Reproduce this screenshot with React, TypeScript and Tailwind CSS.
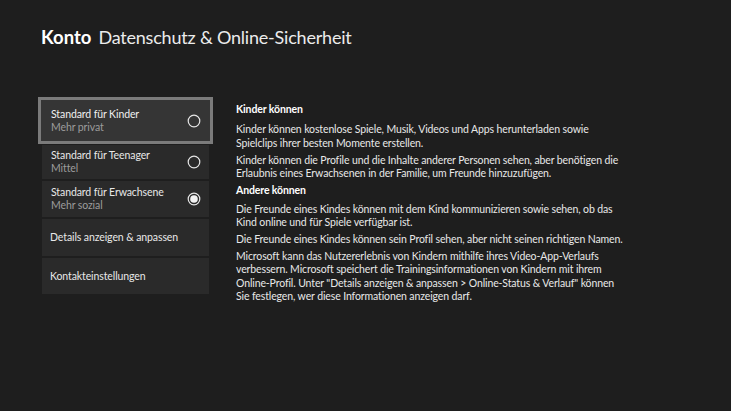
import React from "react";

const font = { fontFamily: 'Lato, "Open Sans", sans-serif' };

function Radio({ checked }: { checked?: boolean }) {
  return (
    <svg width="14" height="14" viewBox="0 0 14 14" className="shrink-0">
      <circle cx="7" cy="7" r="5.8" fill="none" stroke="#e6e6e6" strokeWidth="1.2" />
      {checked && <circle cx="7" cy="7" r="3.8" fill="#f2f2f2" />}
    </svg>
  );
}

type Opt = { title: string; sub: string; checked?: boolean };

const options: Opt[] = [
  { title: "Standard für Kinder", sub: "Mehr privat" },
  { title: "Standard für Teenager", sub: "Mittel" },
  { title: "Standard für Erwachsene", sub: "Mehr sozial", checked: true },
];

export default function App() {
  return (
    <div
      className="w-[731px] h-[411px] bg-[#1e1e1e] text-[#e8e8e8] overflow-hidden"
      style={font}
    >
      <header className="pt-[25px] pl-[41px] flex items-baseline gap-[7px] leading-[24px]">
        <span className="font-bold text-white text-[18.5px]">Konto</span>
        <span className="text-[#ececec] text-[18px] tracking-[-0.2px]">
          Datenschutz &amp; Online-Sicherheit
        </span>
      </header>

      <div className="flex mt-[51px] pl-[42px]">
        {/* settings menu */}
        <nav className="w-[167px] flex flex-col text-[10.5px] leading-[13px] tracking-[-0.1px]">
          <div className="-mx-[1px] h-[41px] bg-[#353535] ring-[3px] ring-[#7b7b7b] flex items-center pl-[10px] pr-[9px]">
            <div className="flex-1">
              <div className="text-[#f0f0f0]">{options[0].title}</div>
              <div className="text-[#9c9c9c]">{options[0].sub}</div>
            </div>
            <Radio />
          </div>
          <div className="mt-[4px] h-[34px] bg-[#2a2a2a] flex items-center pl-[9px] pr-[8px]">
            <div className="flex-1">
              <div>{options[1].title}</div>
              <div className="text-[#9c9c9c]">{options[1].sub}</div>
            </div>
            <Radio />
          </div>
          <div className="mt-[2px] h-[36px] bg-[#2a2a2a] flex items-center pl-[9px] pr-[8px]">
            <div className="flex-1">
              <div>{options[2].title}</div>
              <div className="text-[#9c9c9c]">{options[2].sub}</div>
            </div>
            <Radio checked />
          </div>
          <div className="mt-[2px] h-[37px] bg-[#2a2a2a] flex items-center pl-[8px]">
            Details anzeigen &amp; anpassen
          </div>
          <div className="mt-[2px] h-[36px] bg-[#2a2a2a] flex items-center pl-[8px]">
            Kontakteinstellungen
          </div>
        </nav>

        {/* description */}
        <section className="ml-[27px] w-[440px] text-[10.5px] leading-[13.3px] tracking-[-0.12px] pt-[3px]">
          <h2 className="font-bold text-white">Kinder können</h2>
          <p className="mt-[7px]">
            Kinder können kostenlose Spiele, Musik, Videos und Apps herunterladen sowie
            <br />
            Spielclips ihrer besten Momente erstellen.
          </p>
          <p className="mt-[3.7px]">
            Kinder können die Profile und die Inhalte anderer Personen sehen, aber benötigen die
            <br />
            Erlaubnis eines Erwachsenen in der Familie, um Freunde hinzuzufügen.
          </p>
          <h2 className="mt-[3.7px] font-bold text-white">Andere können</h2>
          <p className="mt-[5.5px]">
            Die Freunde eines Kindes können mit dem Kind kommunizieren sowie sehen, ob das
            <br />
            Kind online und für Spiele verfügbar ist.
          </p>
          <p className="mt-[3.7px]">
            Die Freunde eines Kindes können sein Profil sehen, aber nicht seinen richtigen Namen.
          </p>
          <p className="mt-[3.7px]">
            Microsoft kann das Nutzererlebnis von Kindern mithilfe ihres Video-App-Verlaufs
            <br />
            verbessern. Microsoft speichert die Trainingsinformationen von Kindern mit ihrem
            <br />
            Online-Profil. Unter "Details anzeigen &amp; anpassen &gt; Online-Status &amp; Verlauf" können
            <br />
            Sie festlegen, wer diese Informationen anzeigen darf.
          </p>
        </section>
      </div>
    </div>
  );
}
